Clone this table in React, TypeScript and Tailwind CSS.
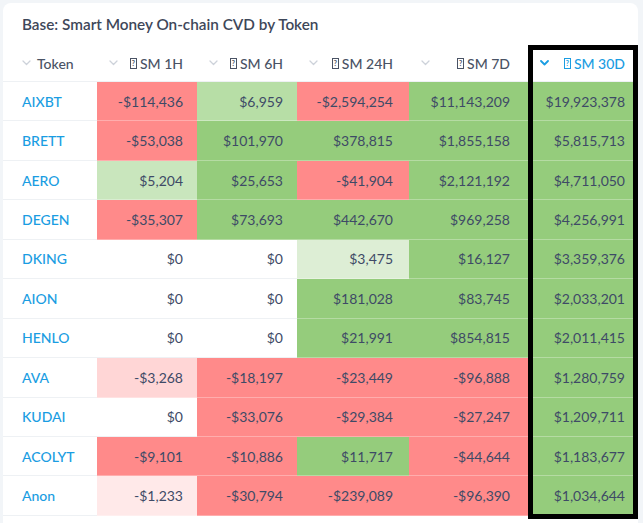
import React from "react";

const R = "bg-[#ff8a8a]";
const G = "bg-[#95cc7c]";
const LG = "bg-[#b7dea6]";
const LG2 = "bg-[#c9e6bd]";
const LG3 = "bg-[#ddeed5]";
const LR = "bg-[#ffd6d6]";
const LR2 = "bg-[#ffe9e9]";
const W = "";

type Cell = [string, string];
const rows: { token: string; cells: Cell[] }[] = [
  { token: "AIXBT", cells: [["-$114,436", R], ["$6,959", LG], ["-$2,594,254", R], ["$11,143,209", G], ["$19,923,378", G]] },
  { token: "BRETT", cells: [["-$53,038", R], ["$101,970", G], ["$378,815", G], ["$1,855,158", G], ["$5,815,713", G]] },
  { token: "AERO", cells: [["$5,204", LG2], ["$25,653", G], ["-$41,904", R], ["$2,121,192", G], ["$4,711,050", G]] },
  { token: "DEGEN", cells: [["-$35,307", R], ["$73,693", G], ["$442,670", G], ["$969,258", G], ["$4,256,991", G]] },
  { token: "DKING", cells: [["$0", W], ["$0", W], ["$3,475", LG3], ["$16,127", G], ["$3,359,376", G]] },
  { token: "AION", cells: [["$0", W], ["$0", W], ["$181,028", G], ["$83,745", G], ["$2,033,201", G]] },
  { token: "HENLO", cells: [["$0", W], ["$0", W], ["$21,991", G], ["$854,815", G], ["$2,011,415", G]] },
  { token: "AVA", cells: [["-$3,268", LR], ["-$18,197", R], ["-$23,449", R], ["-$96,888", R], ["$1,280,759", G]] },
  { token: "KUDAI", cells: [["$0", W], ["-$33,076", R], ["-$29,384", R], ["-$27,247", R], ["$1,209,711", G]] },
  { token: "ACOLYT", cells: [["-$9,101", R], ["-$10,886", R], ["$11,717", G], ["-$44,644", R], ["$1,183,677", G]] },
  { token: "Anon", cells: [["-$1,233", LR2], ["-$30,794", R], ["-$239,089", R], ["-$96,390", R], ["$1,034,644", G]] },
];

const cols = [
  { label: "SM 1H", w: "w-[100px]", pr: "pr-[14px]" },
  { label: "SM 6H", w: "w-[100px]", pr: "pr-[14px]" },
  { label: "SM 24H", w: "w-[112px]", pr: "pr-[16px]" },
  { label: "SM 7D", w: "w-[119px]", pr: "pr-[18px]" },
  { label: "SM 30D", w: "w-[110px]", pr: "pr-[13px]" },
];

function Chevron({ active }: { active?: boolean }) {
  return (
    <svg width="9" height="6" viewBox="0 0 9 6" className="shrink-0">
      <path
        d="M1 1 L4.5 4.5 L8 1"
        fill="none"
        stroke={active ? "#1a9de2" : "#cdd2da"}
        strokeWidth={active ? 1.8 : 1.3}
        strokeLinecap="round"
        strokeLinejoin="round"
      />
    </svg>
  );
}

function Tofu() {
  return (
    <span className="inline-flex items-center justify-center w-[7px] h-[11px] border border-current text-[7px] leading-none font-bold mr-[3px]">
      ?
    </span>
  );
}

export default function App() {
  return (
    <div
      className="w-[643px] h-[523px] overflow-hidden bg-[#f2f5f8] pl-[3px] pt-[3px]"
      style={{ fontFamily: "Lato, 'Noto Sans', sans-serif" }}
    >
      <div className="relative w-[635px] h-[560px] bg-white rounded-lg">
        <div className="h-[42px] flex items-center pl-[19px] pt-[1px] text-[15.3px] font-semibold text-[#3e4759]">
          Base: Smart Money On-chain CVD by Token
        </div>
        <div className="h-[37px] flex items-center border-b border-[#eef1f4] text-[14px] font-medium text-[#4a5365]">
          <div className="w-[94px] h-full flex items-center pl-[19px] gap-[6px]">
            <Chevron />
            <span>Token</span>
          </div>
          {cols.map((c, i) => {
            const active = i === 4;
            return (
              <div
                key={c.label}
                className={`${c.w} ${c.pr} h-full flex items-center justify-between pl-[12px] ${active ? "text-[#1a9de2]" : ""}`}
              >
                <Chevron active={active} />
                <span className="flex items-center">
                  <Tofu />
                  {c.label}
                </span>
              </div>
            );
          })}
        </div>
        {rows.map((r) => (
          <div key={r.token} className="h-[39.45px] flex text-[14px]">
            <div className="w-[94px] h-full flex items-center pl-[19px] text-[#1a9de2] font-medium border-b border-[#eef1f4]">
              {r.token}
            </div>
            {r.cells.map(([v, bg], i) => (
              <div
                key={i}
                className={`${cols[i].w} ${cols[i].pr} ${bg} h-full flex items-center justify-end text-[#3e4a66] border-b ${bg ? "border-white/30" : "border-[#eef1f4]"}`}
              >
                {v}
              </div>
            ))}
          </div>
        ))}
        <div className="absolute left-[525px] top-[42px] w-[110px] h-[474px] border-[5px] border-black" />
      </div>
    </div>
  );
}
